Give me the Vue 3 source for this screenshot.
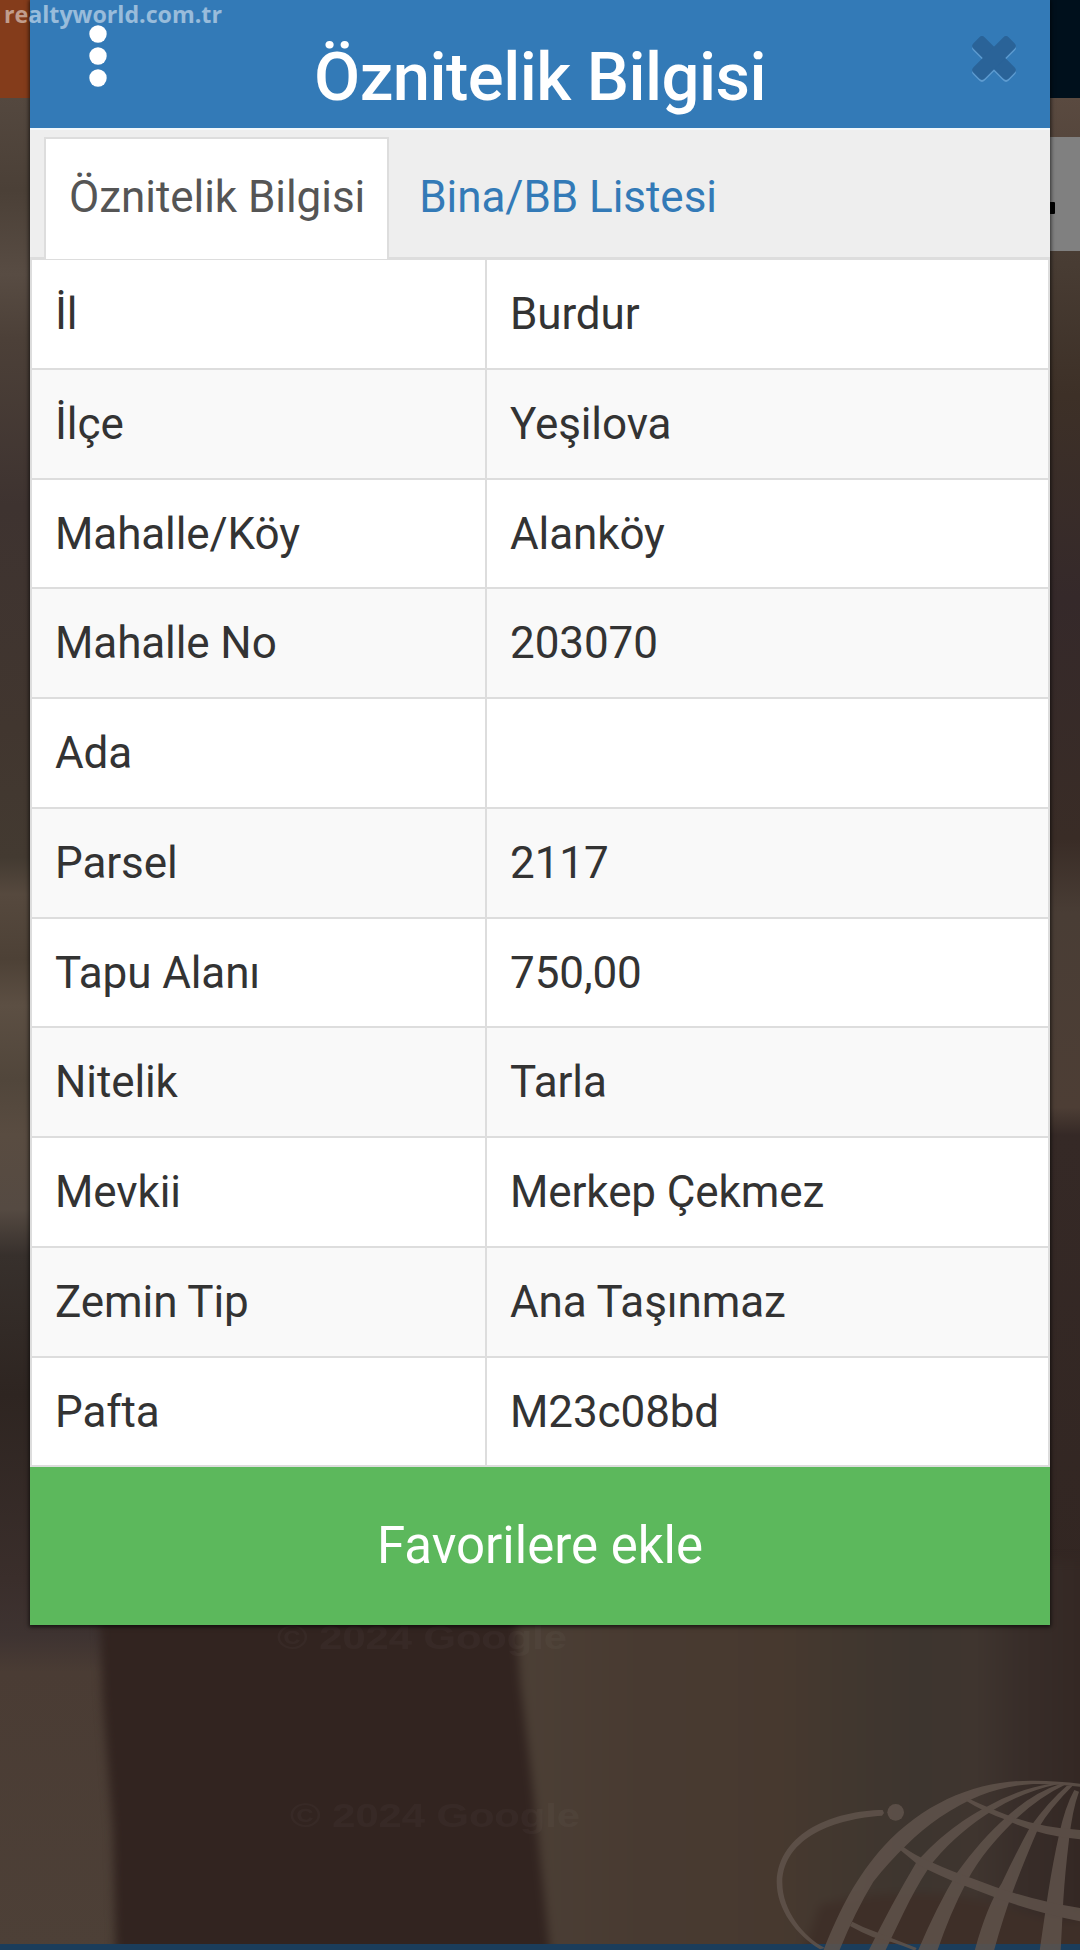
<script setup>
const rows = [
  ['İl', 'Burdur'],
  ['İlçe', 'Yeşilova'],
  ['Mahalle/Köy', 'Alanköy'],
  ['Mahalle No', '203070'],
  ['Ada', ''],
  ['Parsel', '2117'],
  ['Tapu Alanı', '750,00'],
  ['Nitelik', 'Tarla'],
  ['Mevkii', 'Merkep Çekmez'],
  ['Zemin Tip', 'Ana Taşınmaz'],
  ['Pafta', 'M23c08bd'],
]
</script>

<template>
  <div class="page">
    <svg class="map" viewBox="0 0 1080 1950" aria-hidden="true">
      <defs>
        <linearGradient id="west" x1="0" y1="98" x2="0" y2="1950" gradientUnits="userSpaceOnUse">
          <stop offset="0" stop-color="#54483f" />
          <stop offset=".05" stop-color="#4b4037" />
          <stop offset=".095" stop-color="#584c43" />
          <stop offset=".13" stop-color="#4c4038" />
          <stop offset=".22" stop-color="#3e3330" />
          <stop offset=".34" stop-color="#41362f" />
          <stop offset=".41" stop-color="#433a31" />
          <stop offset=".43" stop-color="#56493e" />
          <stop offset=".465" stop-color="#4d4136" />
          <stop offset=".49" stop-color="#5c4f43" />
          <stop offset=".53" stop-color="#51463b" />
          <stop offset=".56" stop-color="#594c41" />
          <stop offset=".60" stop-color="#554a42" />
          <stop offset=".625" stop-color="#37302c" />
          <stop offset=".70" stop-color="#2e2521" />
          <stop offset=".80" stop-color="#3a2e2b" />
          <stop offset=".83" stop-color="#3e3331" />
          <stop offset=".85" stop-color="#4a3c34" />
          <stop offset="1" stop-color="#4d4037" />
        </linearGradient>
        <linearGradient id="east" x1="0" y1="98" x2="0" y2="1950" gradientUnits="userSpaceOnUse">
          <stop offset="0" stop-color="#5a4a40" />
          <stop offset=".09" stop-color="#483c33" />
          <stop offset=".16" stop-color="#3d3027" />
          <stop offset=".27" stop-color="#35292a" />
          <stop offset=".40" stop-color="#392c26" />
          <stop offset=".44" stop-color="#493d35" />
          <stop offset=".545" stop-color="#4d3e35" />
          <stop offset=".56" stop-color="#352926" />
          <stop offset="1" stop-color="#30241f" />
        </linearGradient>
        <linearGradient id="field" x1="500" y1="0" x2="1080" y2="0" gradientUnits="userSpaceOnUse">
          <stop offset="0" stop-color="#4c4036" />
          <stop offset=".25" stop-color="#483a31" />
          <stop offset=".48" stop-color="#47392f" />
          <stop offset=".60" stop-color="#41372f" />
          <stop offset=".72" stop-color="#3d352f" />
          <stop offset=".82" stop-color="#3f352f" />
          <stop offset=".90" stop-color="#382d29" />
          <stop offset="1" stop-color="#342824" />
        </linearGradient>
        <filter id="soft" color-interpolation-filters="sRGB" x="-20%" y="-20%" width="140%" height="140%">
          <feGaussianBlur stdDeviation="5" />
        </filter>
      </defs>
      <rect width="540" height="1950" fill="url(#west)" />
      <rect x="540" width="540" height="1950" fill="url(#east)" />
      <g filter="url(#soft)">
        <path d="M480 1560H1100V1970H480Z" fill="url(#field)" />
        <path d="M98 1560H512L520 1680 532 1780 552 1970H116L113 1830 103 1700Z" fill="#322420" />
        <path d="M820 1905Q920 1880 1010 1908T1090 1900V1960H800Z" fill="#3e2f28" />
      </g>
      <g class="credit">
        <text x="277" y="1649" textLength="290" lengthAdjust="spacingAndGlyphs">© 2024 Google</text>
        <text x="290" y="1827" textLength="290" lengthAdjust="spacingAndGlyphs">© 2024 Google</text>
      </g>
      <rect width="540" height="98" fill="#843c1b" />
      <rect x="540" width="540" height="98" fill="#00101c" />
      <rect x="1000" y="137" width="80" height="114" fill="#808080" />
      <rect x="1030" y="202" width="25" height="12" rx="1" fill="#000" />
      <rect y="1944" width="1080" height="6" fill="#1b3d5b" />
      <g transform="translate(740 1740) scale(.33333)" opacity=".8" fill="#62554d">
        <path d="M250 632C300 505 350 410 430 320C560 180 720 120 880 122Q960 123 1020 131V140Q950 131 880 132C780 138 700 165 600 232C530 280 465 345 400 425Q345 515 298 632Z" />
        <path d="M386 632Q450 500 530 365C600 290 650 250 740 200Q840 145 930 132L955 132Q850 155 760 210C690 255 640 295 580 365C530 430 490 520 436 632Z" />
        <path d="M534 632Q590 500 650 400C700 330 745 280 800 230Q880 158 960 132L978 133Q900 170 830 235C770 295 720 350 680 425Q630 520 592 632Z" />
        <path d="M704 632Q740 500 785 430Q825 345 870 262Q925 185 980 138L1000 135Q930 205 895 265Q850 370 820 450Q790 530 762 632Z" />
        <path d="M899 632Q915 520 925 455Q940 360 957 285Q975 200 1003 150L1017 155Q997 210 987 300Q975 400 970 480L962 632Z" />
        <path d="M682 174Q740 202 815 230Q900 262 1020 270V298Q900 288 800 240Q730 215 678 182Z" />
        <path d="M486 318Q530 350 575 367Q640 397 700 416Q860 480 1020 504V544Q900 520 780 478L660 432Q600 408 535 375L478 328Z" />
        <path d="M337 545Q370 563 410 577L530 624 525 632Q450 602 400 592Q360 575 330 558Z" />
        <path d="M428 210L432 219 426 227C290 235 130 290 127 428C127 510 190 590 255 624L240 628C170 585 110 510 110 425C116 275 285 212 428 210Z" />
        <circle cx="467" cy="217" r="25" />
      </g>
    </svg>

    <main class="panel">
      <header class="head">
        <svg class="dots" viewBox="0 0 18 64" aria-label="Menü">
          <circle cx="9" cy="9" r="8.7" />
          <circle cx="9" cy="31" r="8.7" />
          <circle cx="9" cy="53" r="8.7" />
        </svg>
        <h1>Öznitelik Bilgisi</h1>
        <svg class="close" viewBox="-23 -23 46 48" aria-label="Kapat">
          <g class="glow" transform="translate(0 2)">
            <rect x="-25" y="-8" width="50" height="16" rx="4" transform="rotate(45)" />
            <rect x="-25" y="-8" width="50" height="16" rx="4" transform="rotate(-45)" />
          </g>
          <rect x="-25" y="-8" width="50" height="16" rx="4" transform="rotate(45)" />
          <rect x="-25" y="-8" width="50" height="16" rx="4" transform="rotate(-45)" />
        </svg>
      </header>

      <nav class="tabs">
        <a class="tab active">Öznitelik Bilgisi</a>
        <a class="tab">Bina/BB Listesi</a>
      </nav>

      <dl class="list">
        <div v-for="[name, value] in rows" :key="name" class="row">
          <dt>{{ name }}</dt>
          <dd>{{ value }}</dd>
        </div>
      </dl>

      <button class="favorite">Favorilere ekle</button>
    </main>

    <div class="watermark">realtyworld.com.tr</div>
  </div>
</template>

<style>
body {
  margin: 0;
}
</style>

<style scoped>
.page {
  position: relative;
  width: 1080px;
  height: 1950px;
  overflow: hidden;
  font-family: Roboto, 'Liberation Sans', sans-serif;
}
.map {
  position: absolute;
  inset: 0;
  width: 1080px;
  height: 1950px;
}
.credit text {
  font: bold 34px 'Liberation Sans', sans-serif;
  fill: #fff;
  opacity: 0.024;
}
.panel {
  position: relative;
  display: flex;
  flex-direction: column;
  width: 1020px;
  height: 1625px;
  margin: 0 auto;
  background: #fff;
  box-shadow: 0 1px 4px 1px rgba(0, 0, 0, 0.65);
}
.head {
  display: flex;
  justify-content: space-between;
  height: 128px;
  box-sizing: border-box;
  padding: 25px 33px 0 59px;
  background: #337ab7;
}
.dots {
  width: 18px;
  height: 64px;
  fill: #fff;
}
h1 {
  margin: 13px 0 0 2px;
  font-size: 67px;
  font-weight: 500;
  line-height: 78px;
  letter-spacing: -0.55px;
  color: #fff;
  white-space: nowrap;
}
.close {
  width: 46px;
  height: 48px;
  margin-top: 10px;
  fill: #2a6398;
}
.close .glow {
  fill: #5d9bd0;
}
.tabs {
  display: flex;
  height: 132px;
  box-sizing: border-box;
  padding: 7px 14px 0;
  background: #eee;
  border-top: 2px solid #f1f7fb;
  border-bottom: 3px solid #ddd;
}
.tab {
  box-sizing: border-box;
  height: 122px;
  padding: 0 22px 0 23px;
  margin-right: 5px;
  border: 2px solid transparent;
  border-bottom: 0;
  font-size: 44px;
  line-height: 117px;
  letter-spacing: -0.05px;
  color: #337ab7;
  white-space: nowrap;
}
.tab.active {
  color: #555;
  background: #fff;
  border-color: #ddd;
}
.list {
  margin: 0;
  border: solid #ddd;
  border-width: 0 2px;
}
.row {
  display: flex;
  height: 109.75px;
  box-sizing: border-box;
  border-bottom: 2px solid #ddd;
  font-size: 44px;
  line-height: 109px;
  letter-spacing: -0.1px;
  color: #333;
}
.row:nth-child(even) {
  background: #f9f9f9;
}
dt {
  box-sizing: border-box;
  width: 455px;
  padding-left: 23px;
  border-right: 2px solid #ddd;
}
dd {
  margin: 0;
  padding-left: 23px;
}
.favorite {
  flex: 1;
  border: 0;
  padding: 0 0 2px;
  background: #5cb85c;
  color: #fff;
  font: 400 51px Roboto, sans-serif;
}
.watermark {
  position: absolute;
  left: 4px;
  top: 0;
  font: bold 23.2px/29px 'Open Sans', sans-serif;
  color: rgba(255, 255, 255, 0.5);
}
</style>
